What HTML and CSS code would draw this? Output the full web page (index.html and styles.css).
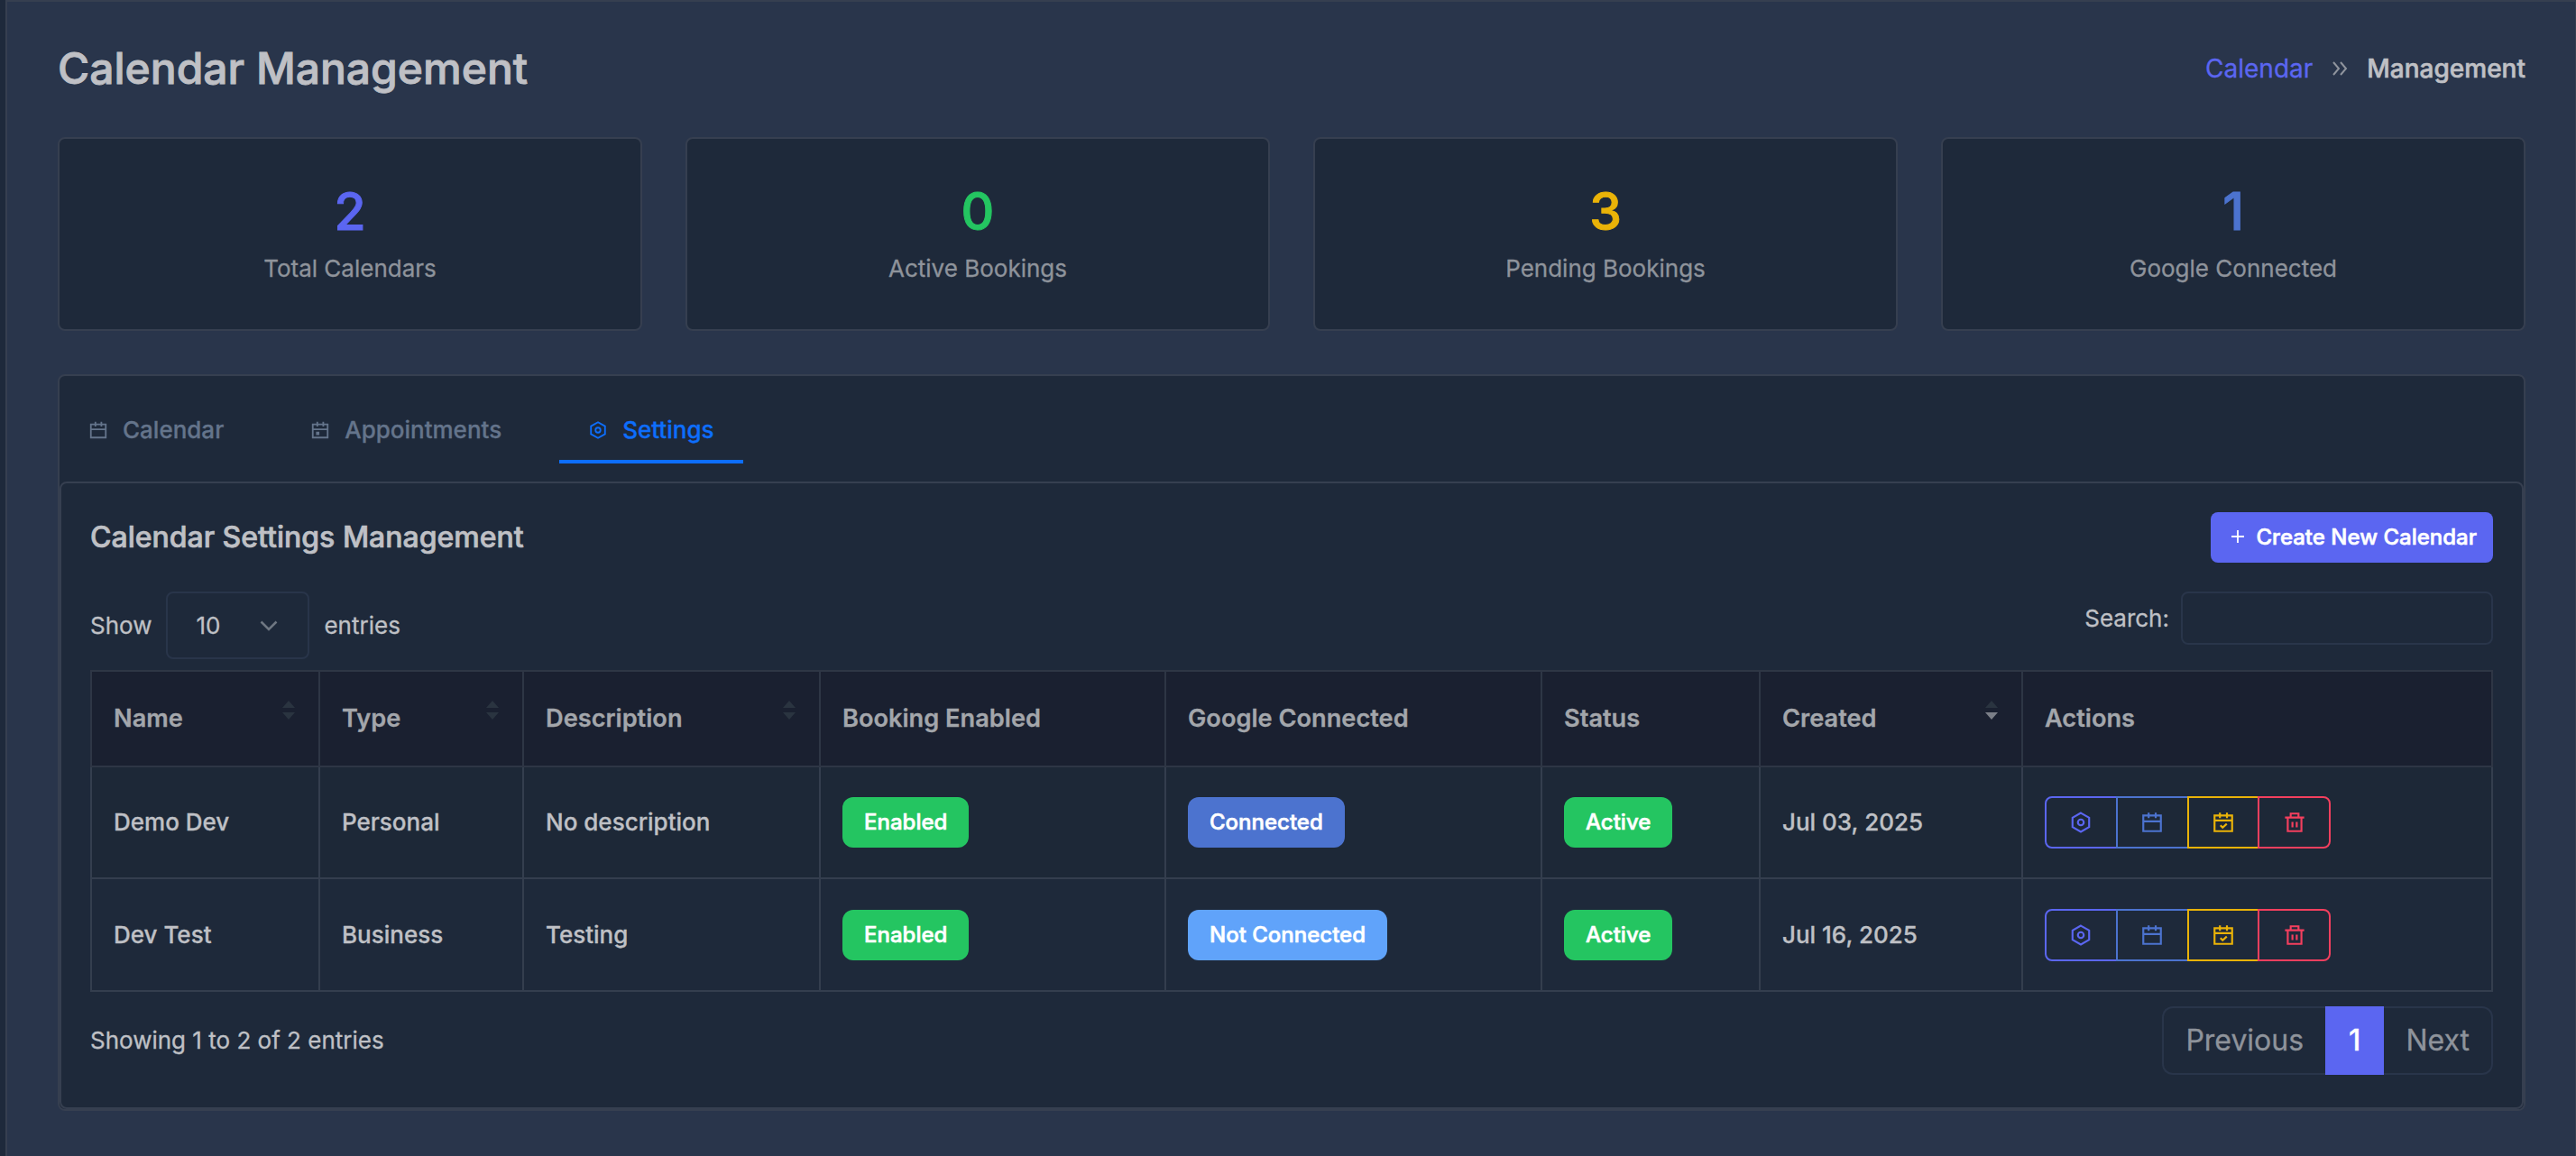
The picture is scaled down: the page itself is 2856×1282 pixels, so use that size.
FILE: index.html
```html
<!DOCTYPE html>
<html lang="en">
<head>
    <meta charset="UTF-8">
    <meta name="viewport" content="width=device-width, initial-scale=1.0">
    <title>Calendar Management</title>
    <link rel="stylesheet" href="styles.css">
</head>
<body>
    <!-- Shared icons -->
    <svg class="icon-defs">
        <symbol id="icon-calendar" viewBox="0 0 24 24">
            <path d="M3 5h18v16H3zM3 11h18M8.500 2v5.500M15.700 2v5.500"/>
        </symbol>
        <symbol id="icon-event" viewBox="0 0 24 24">
            <path d="M3 5h18v16H3zM3 11h18M8.500 2v5.500M15.700 2v5.500M8 15h2v2H8z"/>
        </symbol>
        <symbol id="icon-check" viewBox="0 0 24 24">
            <path d="M3 5h18v16H3zM3 10h18M8.500 2v5.500M15.700 2v5.500M9 15l2.300 2.300 4.200-3.800"/>
        </symbol>
        <symbol id="icon-settings" viewBox="0 0 24 24">
            <path d="M12 2.400l8.500 4.800v9.600L12 21.600l-8.500-4.800V7.200z"/>
            <circle cx="12" cy="12" r="3"/>
        </symbol>
        <symbol id="icon-trash" viewBox="0 0 24 24">
            <path d="M2.200 7h19.600M5 7v14h14V7M8 7V3h8v4M9.800 11.500V17M14.200 11.500V17"/>
        </symbol>
    </svg>

    <div class="page">
        <div class="page-header">
            <h1>Calendar Management</h1>
            <div class="breadcrumb">
                <a href="#">Calendar</a>
                <svg class="separator" viewBox="0 0 18 16"><path d="M2 1l6 7-6 7M10 1l6 7-6 7"/></svg>
                <span>Management</span>
            </div>
        </div>

        <div class="stats">
            <div class="stat">
                <div class="stat-value primary">2</div>
                <div class="stat-label">Total Calendars</div>
            </div>
            <div class="stat">
                <div class="stat-value success">0</div>
                <div class="stat-label">Active Bookings</div>
            </div>
            <div class="stat">
                <div class="stat-value warning">3</div>
                <div class="stat-label">Pending Bookings</div>
            </div>
            <div class="stat">
                <div class="stat-value info">1</div>
                <div class="stat-label">Google Connected</div>
            </div>
        </div>

        <div class="panel">
            <div class="tabs">
                <a class="tab" href="#"><svg class="icon"><use href="#icon-calendar"/></svg>Calendar</a>
                <a class="tab" href="#"><svg class="icon"><use href="#icon-event"/></svg>Appointments</a>
                <a class="tab active" href="#"><svg class="icon"><use href="#icon-settings"/></svg>Settings</a>
            </div>

            <div class="panel-body">
                <div class="panel-title">
                    <h2>Calendar Settings Management</h2>
                    <button class="create-btn"><svg class="plus" viewBox="0 0 16 16"><path d="M8 1v14M1 8h14"/></svg>Create New Calendar</button>
                </div>

                <div class="controls">
                    <div class="length">
                        Show
                        <span class="select">10<svg viewBox="0 0 20 12"><path d="M1.500 1.500L10 10l8.500-8.500"/></svg></span>
                        entries
                    </div>
                    <label class="search">Search:<input type="text"></label>
                </div>

                <table>
                    <colgroup>
                        <col class="col-name">
                        <col class="col-type">
                        <col class="col-description">
                        <col class="col-booking">
                        <col class="col-google">
                        <col class="col-status">
                        <col class="col-created">
                        <col>
                    </colgroup>
                    <thead>
                        <tr>
                            <th><div class="th">Name<span class="sort"></span></div></th>
                            <th><div class="th">Type<span class="sort"></span></div></th>
                            <th><div class="th">Description<span class="sort"></span></div></th>
                            <th>Booking Enabled</th>
                            <th>Google Connected</th>
                            <th>Status</th>
                            <th><div class="th">Created<span class="sort desc"></span></div></th>
                            <th>Actions</th>
                        </tr>
                    </thead>
                    <tbody>
                        <tr>
                            <td>Demo Dev</td>
                            <td>Personal</td>
                            <td>No description</td>
                            <td><span class="badge green">Enabled</span></td>
                            <td><span class="badge blue">Connected</span></td>
                            <td><span class="badge green">Active</span></td>
                            <td>Jul 03, 2025</td>
                            <td>
                                <div class="btn-group">
                                    <button class="primary"><svg class="icon"><use href="#icon-settings"/></svg></button>
                                    <button class="info"><svg class="icon"><use href="#icon-calendar"/></svg></button>
                                    <button class="warning"><svg class="icon"><use href="#icon-check"/></svg></button>
                                    <button class="danger"><svg class="icon"><use href="#icon-trash"/></svg></button>
                                </div>
                            </td>
                        </tr>
                        <tr>
                            <td>Dev Test</td>
                            <td>Business</td>
                            <td>Testing</td>
                            <td><span class="badge green">Enabled</span></td>
                            <td><span class="badge light-blue">Not Connected</span></td>
                            <td><span class="badge green">Active</span></td>
                            <td>Jul 16, 2025</td>
                            <td>
                                <div class="btn-group">
                                    <button class="primary"><svg class="icon"><use href="#icon-settings"/></svg></button>
                                    <button class="info"><svg class="icon"><use href="#icon-calendar"/></svg></button>
                                    <button class="warning"><svg class="icon"><use href="#icon-check"/></svg></button>
                                    <button class="danger"><svg class="icon"><use href="#icon-trash"/></svg></button>
                                </div>
                            </td>
                        </tr>
                    </tbody>
                </table>

                <div class="table-footer">
                    <div>Showing 1 to 2 of 2 entries</div>
                    <div class="pagination">
                        <a class="previous" href="#">Previous</a>
                        <a class="current" href="#">1</a>
                        <a class="next" href="#">Next</a>
                    </div>
                </div>
            </div>
        </div>
    </div>
</body>
</html>
```
FILE: styles.css
```css
* {
    box-sizing: border-box;
}
body {
    margin: 0;
    height: 1282px;
    border-left: 6px solid #1e293b;
    background-color: #29354b;
    color: #bfc0c5;
    font-family: Inter, sans-serif;
    font-size: 26px;
    line-height: 40px;
    -webkit-text-stroke: 0.3px;
    overflow: hidden;
}
a {
    text-decoration: none;
}
.icon-defs {
    display: none;
}
.icon {
    width: 22px;
    height: 22px;
    fill: none;
    stroke: currentColor;
    stroke-width: 2;
}
.page {
    height: 1282px;
    padding: 0 55px 0 56px;
    border: 2px solid #363f50;
    border-right-width: 1px;
    border-bottom: none;
}
.page-header {
    display: flex;
    justify-content: space-between;
    align-items: center;
    height: 150px;
    padding-bottom: 2px;
}
h1 {
    margin: 0;
    font-size: 48px;
    font-weight: 500;
    -webkit-text-stroke: 0.9px;
}
.breadcrumb {
    display: flex;
    align-items: center;
    font-size: 28px;
    font-weight: 500;
}
.breadcrumb a {
    color: #5b66f1;
    font-weight: 400;
}
.breadcrumb span {
    -webkit-text-stroke: 0.6px;
}
.separator {
    width: 18px;
    height: 16px;
    margin: 0 21px;
    fill: none;
    stroke: #8f949d;
    stroke-width: 2;
}

/* Stats */
.stats {
    display: grid;
    grid-template-columns: repeat(4, 1fr);
    gap: 48px;
}
.stat {
    height: 215px;
    padding-top: 49px;
    border: 2px solid #363f50;
    border-radius: 8px;
    background-color: #1e293a;
    text-align: center;
}
.stat-value {
    font-size: 57px;
    font-weight: 500;
    line-height: 64px;
    -webkit-text-stroke: 1px;
}
.stat-label {
    margin-top: 11px;
    color: #8e939b;
}
.primary {
    color: #5b66f1;
}
.success {
    color: #24c561;
}
.warning {
    color: #eab308;
}
.info {
    color: #4c73cf;
}
.danger {
    color: #f43f5e;
}

/* Tabs panel */
.panel {
    height: 817px;
    margin-top: 48px;
    border: 2px solid #363f50;
    border-radius: 8px;
    background-color: #1e293a;
}
.tabs {
    display: flex;
    gap: 32px;
    height: 117px;
    padding-top: 20px;
}
.tab {
    display: flex;
    gap: 16px;
    align-items: center;
    height: 77px;
    padding: 6px 32px 0;
    border-bottom: 4px solid transparent;
    color: #64748b;
    font-weight: 500;
}
.tab.active {
    border-bottom-color: #0d6efd;
    color: #0d6efd;
}
.panel-body {
    height: 696px;
    padding: 32px;
    border: 2px solid #363f50;
    border-radius: 8px;
}
.panel-title {
    display: flex;
    justify-content: space-between;
    align-items: center;
}
h2 {
    margin: 0;
    font-size: 32px;
    font-weight: 500;
    -webkit-text-stroke: 0.7px;
}
.create-btn {
    display: flex;
    gap: 12px;
    align-items: center;
    height: 56px;
    padding: 0 18px 2px 22px;
    border: none;
    border-radius: 8px;
    background-color: #5b66f1;
    color: #fff;
    font: 500 24px Inter, sans-serif;
    -webkit-text-stroke: 0.6px;
}
.plus {
    width: 16px;
    height: 16px;
    fill: none;
    stroke: #fff;
    stroke-width: 1.8;
}
.controls {
    display: flex;
    justify-content: space-between;
    align-items: flex-start;
    height: 87px;
    margin-top: 32px;
}
.length {
    display: flex;
    gap: 16px;
    align-items: center;
}
.select {
    display: flex;
    justify-content: space-between;
    align-items: center;
    width: 159px;
    height: 75px;
    padding: 0 33px 0 31px;
    border: 2px solid #29354a;
    border-radius: 8px;
}
.select svg {
    width: 20px;
    height: 12px;
    fill: none;
    stroke: #6f7782;
    stroke-width: 2.5;
}
.search {
    display: flex;
    gap: 13px;
    align-items: center;
}
.search input {
    width: 346px;
    height: 59px;
    border: 2px solid #29354a;
    border-radius: 8px;
    background: transparent;
}

/* Table */
table {
    width: 100%;
    border-collapse: collapse;
    table-layout: fixed;
}
.col-name {
    width: 253px;
}
.col-type {
    width: 226px;
}
.col-description {
    width: 329px;
}
.col-booking {
    width: 383px;
}
.col-google {
    width: 417px;
}
.col-status {
    width: 242px;
}
.col-created {
    width: 291px;
}
th, td {
    padding: 0 24px;
    border: 2px solid #343e4e;
    text-align: left;
}
th {
    height: 106px;
    background-color: #1a2030;
    border-color: #2e3645;
    color: #a3a6ab;
    font-weight: 600;
    font-size: 27.2px;
}
td {
    height: 125px;
    font-weight: 500;
}
tbody tr:first-child td {
    height: 124px;
    background-color: #1d2837;
}
.th {
    display: flex;
    justify-content: space-between;
    align-items: center;
}
.sort {
    display: flex;
    flex-direction: column;
    gap: 5px;
    margin: 0 2px 19px 0;
}
.sort::before, .sort::after {
    content: "";
    border-left: 7px solid transparent;
    border-right: 7px solid transparent;
}
.sort::before {
    border-bottom: 8px solid #2a3440;
}
.sort::after {
    border-top: 8px solid #2a3440;
}
.sort.desc::after {
    border-top-color: #7b7f88;
}
.badge {
    display: inline-block;
    height: 56px;
    padding: 0 24px;
    border-radius: 12px;
    color: #fff;
    font-size: 24px;
    font-weight: 500;
    line-height: 56px;
    vertical-align: middle;
    -webkit-text-stroke: 0.6px;
}
.green {
    background-color: #24c561;
}
.blue {
    background-color: #4c73cf;
}
.light-blue {
    background-color: #60a3fa;
}
.btn-group {
    display: flex;
}
.btn-group button {
    display: flex;
    justify-content: center;
    align-items: center;
    width: 80.75px;
    height: 58px;
    margin-left: -2px;
    padding: 0;
    border: 2px solid currentColor;
    background: transparent;
}
.btn-group button:first-child {
    margin-left: 0;
    border-radius: 8px 0 0 8px;
}
.btn-group button:last-child {
    border-radius: 0 8px 8px 0;
}
.btn-group .icon {
    width: 26px;
    height: 26px;
}

/* Footer */
.table-footer {
    display: flex;
    justify-content: space-between;
    align-items: center;
    height: 76px;
    margin-top: 16px;
}
.pagination {
    display: flex;
    font-size: 32px;
}
.pagination a {
    display: flex;
    align-items: center;
    height: 76px;
    padding: 0 24px;
    border: 2px solid #29354a;
    color: #8e939b;
}
.pagination .previous {
    border-right: none;
    border-radius: 12px 0 0 12px;
}
.pagination .current {
    border-color: #5b66f1;
    background-color: #5b66f1;
    color: #fff;
    font-weight: 500;
}
.pagination .next {
    border-left: none;
    border-radius: 0 12px 12px 0;
}
```
